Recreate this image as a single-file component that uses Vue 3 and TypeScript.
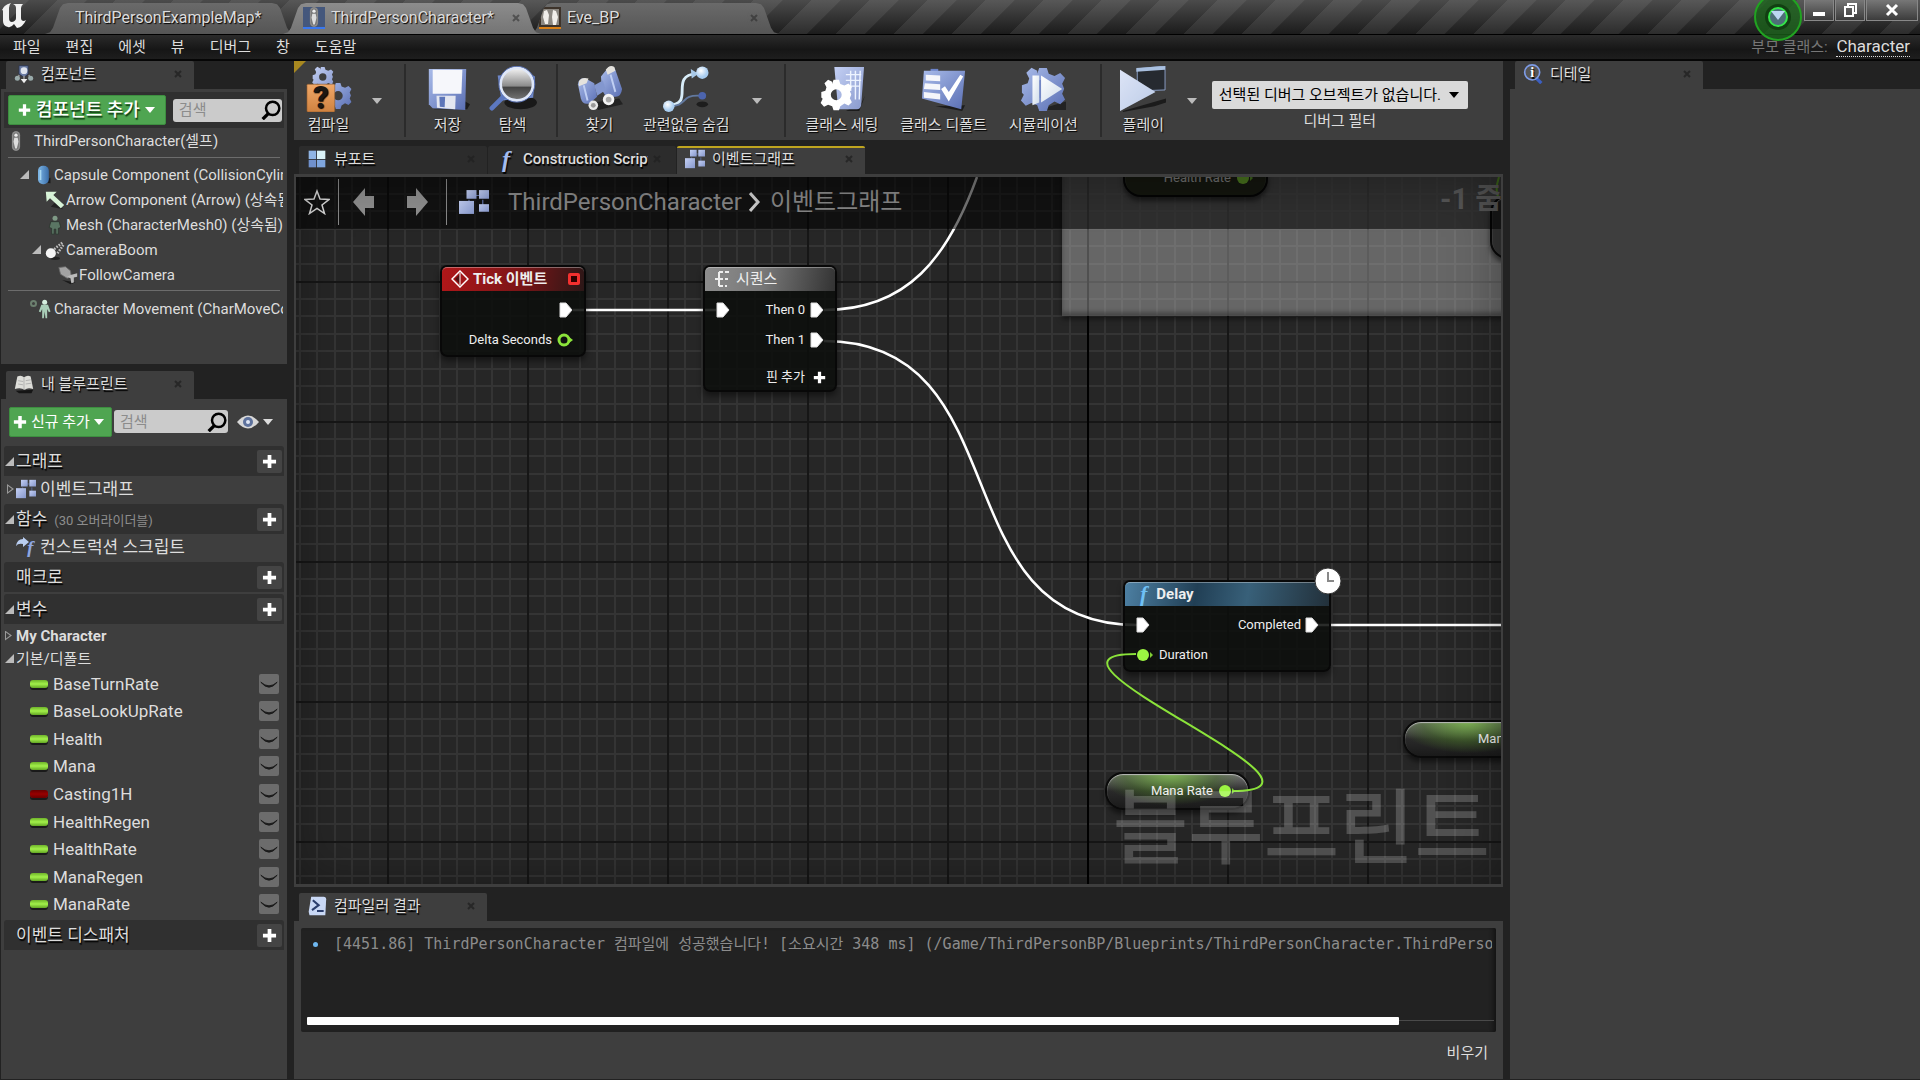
<script setup lang="ts">
interface Variable { name: string; kind: 'float' | 'bool' }
interface Tool { label: string; icon: string; menu?: boolean; last?: boolean }

const menus: string[] = ['파일', '편집', '에셋', '뷰', '디버그', '창', '도움말']

const tools: Tool[] = [
  { label: '컴파일', icon: 'compile', menu: true, last: true },
  { label: '저장', icon: 'save' },
  { label: '탐색', icon: 'browse', last: true },
  { label: '찾기', icon: 'find' },
  { label: '관련없음 숨김', icon: 'hide', menu: true, last: true },
  { label: '클래스 세팅', icon: 'settings' },
  { label: '클래스 디폴트', icon: 'defaults' },
  { label: '시뮬레이션', icon: 'simulate', last: true },
  { label: '플레이', icon: 'play', menu: true },
]

const components = [
  { label: 'Capsule Component (CollisionCylinder) (상속됨)', icon: 'capsule', depth: 1, open: true },
  { label: 'Arrow Component (Arrow) (상속됨)', icon: 'arrowc', depth: 2, open: false },
  { label: 'Mesh (CharacterMesh0) (상속됨)', icon: 'mesh', depth: 2, open: false },
  { label: 'CameraBoom', icon: 'boom', depth: 2, open: true },
  { label: 'FollowCamera', icon: 'camera', depth: 3, open: false },
]

const variables: Variable[] = [
  { name: 'BaseTurnRate', kind: 'float' },
  { name: 'BaseLookUpRate', kind: 'float' },
  { name: 'Health', kind: 'float' },
  { name: 'Mana', kind: 'float' },
  { name: 'Casting1H', kind: 'bool' },
  { name: 'HealthRegen', kind: 'float' },
  { name: 'HealthRate', kind: 'float' },
  { name: 'ManaRegen', kind: 'float' },
  { name: 'ManaRate', kind: 'float' },
]

const minor: number[] = [17, 34, 52, 69, 87, 104, 122]
</script>

<template>
  <div class="app">
    <svg class="defs" width="0" height="0" aria-hidden="true">
      <defs>
        <linearGradient id="blue" x1="0" y1="0" x2="1" y2="1">
          <stop offset="0" stop-color="#a9bbe9" /><stop offset="1" stop-color="#5a6fb4" />
        </linearGradient>
        <linearGradient id="pale" x1="0" y1="0" x2="1" y2="1">
          <stop offset="0" stop-color="#c4d0f4" /><stop offset="1" stop-color="#8798cc" />
        </linearGradient>
        <linearGradient id="white" x1="0" y1="0" x2="1" y2="1">
          <stop offset="0" stop-color="#ffffff" /><stop offset="1" stop-color="#cfdcea" />
        </linearGradient>
        <radialGradient id="ball" cx=".4" cy=".35">
          <stop offset="0" stop-color="#ffffff" /><stop offset="1" stop-color="#a9cdf0" />
        </radialGradient>
        <linearGradient id="lens" x1="0" y1="0" x2="0" y2="1">
          <stop offset="0" stop-color="#f5f5f5" /><stop offset=".55" stop-color="#8c8c8c" /><stop offset=".6" stop-color="#444" /><stop offset="1" stop-color="#777" />
        </linearGradient>
        <linearGradient id="orange" x1="0" y1="0" x2="0" y2="1">
          <stop offset="0" stop-color="#f0a869" /><stop offset="1" stop-color="#cf8240" />
        </linearGradient>
        <linearGradient id="cap" x1="0" y1="0" x2="1" y2="0">
          <stop offset="0" stop-color="#7db6e6" /><stop offset="1" stop-color="#3b6ea8" />
        </linearGradient>
      </defs>
      <symbol id="gear" viewBox="-12 -12 24 24">
        <path fill-rule="evenodd" d="M-2-11h4l1 3 3 1.200 3-1.500 2.500 2.500-1.500 3 1 2.500 0 .3-1 2.500 1.500 3-2.500 2.500-3-1.500L3 8.500 2 11.500h-4l-1-3-3-1.200-3 1.500-2.500-2.800 1.500-3L-11 2v-4l3-1 .8-2.500-1.500-3 2.700-2.600 3 1.600L-3-8zM0-4a4 4 0 1 0 0 8a4 4 0 1 0 0-8z" />
      </symbol>
      <symbol id="i-compile" viewBox="0 0 48 48">
        <use href="#gear" x="6" y="0" width="23" height="23" fill="url(#pale)" />
        <use href="#gear" x="19" y="16" width="29" height="30" fill="url(#blue)" />
        <rect x="1" y="19" width="29" height="29" rx="1" fill="url(#orange)" stroke="#8a5526" stroke-width=".6" />
        <text x="15.500" y="44" text-anchor="middle" class="mark">?</text>
      </symbol>
      <symbol id="i-save" viewBox="0 0 48 48">
        <path d="M9 45h35l3-5-5-3z" fill="#1c1c1c" />
        <path d="M4 3h39l-1 43-34-2-4-4z" fill="url(#blue)" />
        <path d="M8 4h31l-1 25H8z" fill="#f6f7fb" />
        <path d="M12 31h20l-.5 14-19-1.500z" fill="#e3e6f0" /><path d="M15 32h6l-.5 11-5-.6z" fill="#5d75b8" />
      </symbol>
      <symbol id="i-browse" viewBox="0 0 48 48">
        <ellipse cx="32" cy="38" rx="17" ry="7" fill="#191919" />
        <path d="M8 10l34-2 5 3-2 22-33 3z" fill="#6e87c8" />
        <path d="M15 31L2 44" stroke="#5c78c0" stroke-width="5" stroke-linecap="round" />
        <circle cx="28" cy="19" r="17" fill="url(#lens)" stroke="#dfe7f8" stroke-width="3" />
        <circle cx="28" cy="19" r="18.700" fill="none" stroke="#5b74b8" stroke-width="1" />
      </symbol>
      <symbol id="i-find" viewBox="0 0 48 48">
        <path d="M18 38l26-4 4 6-26 6z" fill="#222" />
        <path d="M1 19q1-7 8-6l9 5 3 14-8 7q-7 2-9-5z" fill="url(#blue)" /><path d="M25 11l8-10q6-1 7 3l7 20q-1 9-8 8l-8 1-5-8z" fill="url(#blue)" />
        <path d="M2 16q3-5 10-3l-2 5-8 3zM30 4q4-6 9-3l1 4-8 4z" fill="#e4e2dd" /><path d="M18 20l9-5 3 10-9 6z" fill="#8397cf" />
        <path d="M7 20l4 16M35 9l5 18" stroke="#c0cff3" stroke-width="2" />
        <circle cx="17" cy="41" r="5" fill="#e8e8e8" /><circle cx="17" cy="41" r="2.500" fill="#999" /><circle cx="33" cy="35" r="6" fill="#f4f4f4" /><circle cx="33" cy="35" r="3" fill="#aaa" />
      </symbol>
      <symbol id="i-hide" viewBox="0 0 48 48">
        <ellipse cx="41" cy="40" rx="6" ry="3" fill="#1d1d1d" />
        <path d="M5 41c30 0 0-31 30-33" fill="none" stroke="#d8ecf8" stroke-width="3" /><path d="M29 3l8 5-7 5z" fill="#a8c9e8" />
        <path d="M6 42c20 0 12-12 32-11" fill="none" stroke="#62799f" stroke-width="2" />
        <circle cx="6" cy="42" r="6" fill="url(#ball)" /><circle cx="41" cy="7" r="6.500" fill="url(#ball)" /><circle cx="41" cy="31" r="4" fill="#4c64ad" />
      </symbol>
      <symbol id="i-settings" viewBox="0 0 48 48">
        <path d="M28 47l16-8 4-8-6 16z" fill="#1c1c1c" />
        <path d="M16 1h31l-3 40q-1 5-6 4H20z" fill="url(#pale)" /><path d="M28 9h16M28 15h16M28 21h15M33 5v21M38 5v30M43 5l-1 30" stroke="#edf3ff" stroke-width="1.500" />
        <use href="#gear" x="1" y="12" width="34" height="36" fill="#fff" />
      </symbol>
      <symbol id="i-defaults" viewBox="0 0 48 48">
        <path d="M15 42l28 5 3-6z" fill="#1c1c1c" /><path d="M10 3h8v4h-8z" fill="#6c83c9" />
        <path d="M3 5h43l-4 40L1 34z" fill="url(#blue)" />
        <path d="M5 9l15 1v6L5 15zM4 18l16 1v6L3 24zM3 27l17 2v6L3 33z" fill="#f5f6fa" /><path d="M21 24l4-3 4 6L41 9l3 2-15 26z" fill="#fff" />
      </symbol>
      <symbol id="i-simulate" viewBox="0 0 48 48">
        <path d="M18 46l30-9v9z" fill="#222" />
        <use href="#gear" x="0" y="0" width="48" height="48" fill="url(#blue)" /><circle cx="24" cy="24" r="10" fill="#7286c4" />
        <path d="M13 10h7v28l-7 3z" fill="url(#white)" /><path d="M22 10l22 14-22 14z" fill="url(#white)" />
      </symbol>
      <symbol id="i-play" viewBox="0 0 48 48">
        <path d="M3 47l45-13v4l-12 4-33 6z" fill="#1b1b1b" />
        <path d="M18 3L47 0v25l-29 1z" fill="#262a30" stroke="#8ba0c8" stroke-width="1" /><path d="M17 2L47 0v4L17 6z" fill="#a9c0e0" />
        <path d="M0 4l37 23L0 47z" fill="url(#white)" /><path d="M0 4l37 23L0 47z" fill="#8fa5e2" opacity=".3" />
      </symbol>
      <symbol id="i-graph" viewBox="0 0 24 24">
        <path d="M11 6h6M8 14v-4M19 10v6" stroke="#5d6da1" stroke-width="1" />
        <rect x="6" y="1" width="8" height="8" fill="url(#pale)" /><rect x="16" y="1" width="8" height="8" fill="url(#pale)" />
        <rect x="0" y="11" width="12" height="12" fill="url(#pale)" /><rect x="16" y="14" width="8" height="7" fill="url(#pale)" />
      </symbol>
      <symbol id="i-viewport" viewBox="0 0 24 24">
        <rect x="2" y="2" width="9" height="10" fill="#8fb4e4" /><rect x="12" y="2" width="10" height="10" fill="#d9f1f7" /><rect x="2" y="13" width="9" height="9" fill="#6f90cc" /><rect x="12" y="13" width="10" height="9" fill="#7fa6de" />
      </symbol>
      <symbol id="i-components" viewBox="0 0 24 24">
        <path d="M6 2h11v10l-5 4-6-4z" fill="#6b7ca5" stroke="#2b3550" /><circle cx="12" cy="8" r="4" fill="#dfe4ee" />
        <path d="M6 13l-1 5M12 14v6M18 13l1 5" stroke="#8f8f8f" stroke-width="2" /><circle cx="4" cy="17" r="3" fill="#9aa" /><circle cx="20" cy="17" r="3" fill="#9aa" /><path d="M8 18h8l-4 5z" fill="#eee" />
      </symbol>
      <symbol id="i-book" viewBox="0 0 24 24">
        <path d="M2 20l4 3h15l2-4z" fill="#151515" /><path d="M4 3q5-2 8 1 4-3 8-1l3 15q-7-2-10 1-5-3-12-1z" fill="#deded9" /><path d="M12 4v15M5 8l6 1M5 12l6 1M14 8l6-1M14 12l7-1" stroke="#aaa" />
      </symbol>
      <symbol id="i-actor" viewBox="0 0 24 24">
        <rect x="7" y="0" width="10" height="24" rx="5" fill="#777" /><rect x="8" y="1" width="8" height="22" rx="4" fill="none" stroke="#999" />
        <circle cx="12" cy="5" r="2" fill="#eee" /><path d="M10 8h4l1 5-2 8h-2l-2-8z" fill="#ddd" />
      </symbol>
      <symbol id="i-capsule" viewBox="0 0 24 24">
        <path d="M13 21l8-6v7z" fill="#1c1c1c" /><rect x="6" y="1" width="13" height="22" rx="6" fill="url(#cap)" /><path d="M9 6v12" stroke="#a9d8f0" stroke-width="2" />
      </symbol>
      <symbol id="i-arrowc" viewBox="0 0 24 24">
        <path d="M7 20l15 3-10-8z" fill="#222" /><path d="M1 2h13l-4 4 13 12-4 4L6 10l-4 4z" fill="#d8f3d8" />
      </symbol>
      <symbol id="i-mesh" viewBox="0 0 24 24">
        <circle cx="12" cy="4" r="3" fill="#7f9a86" /><path d="M7 8h10l2 7-3 1v7h-3v-6h-2v6H8v-7l-3-1z" fill="#5a7563" stroke="#2b352e" />
      </symbol>
      <symbol id="i-movement" viewBox="0 0 24 24">
        <circle cx="14" cy="4" r="3" fill="#d5efdf" /><path d="M10 7h8l3 8-2 1-2-4v11h-2l-1-8-1 8h-2V12l-2 4-2-1z" fill="#a9ceb8" />
      </symbol>
      <symbol id="i-boom" viewBox="0 0 24 24">
        <path d="M11 11l10-8M15 16l7-10" stroke="#bbb" stroke-width="3" stroke-dasharray="2 1.500" /><ellipse cx="12" cy="22" rx="6" ry="2" fill="#222" /><circle cx="7" cy="16" r="6" fill="#f4f4f4" />
      </symbol>
      <symbol id="i-camera" viewBox="0 0 24 24">
        <path d="M5 18l10 5 6-2z" fill="#1b1b1b" /><path d="M1 3l8-1 6 5 1 7-5 2-8-5z" fill="#a2a2a2" stroke="#666" /><path d="M15 12l8-2v4l-4 1v6l-3 1-1-6-4-2z" fill="#bbb" />
      </symbol>
      <symbol id="i-info" viewBox="0 0 24 24">
        <path d="M15 16l7 7" stroke="#3c5fc0" stroke-width="4" /><circle cx="11" cy="10" r="9" fill="#555" stroke="#7d9be6" stroke-width="2" /><text x="11" y="16" text-anchor="middle" class="info">i</text>
      </symbol>
      <symbol id="i-log" viewBox="0 0 24 24">
        <path d="M5 1h15q3 0 3 3l-1 19H3L2 19z" fill="#c9d8f5" /><path d="M7 5l7 6-8 6M12 18h8" fill="none" stroke="#2b3e6d" stroke-width="2.500" />
      </symbol>
      <symbol id="i-search" viewBox="0 0 24 24">
        <circle cx="14" cy="10" r="8" fill="none" stroke="#000" stroke-width="3" /><path d="M9 16l-7 7" stroke="#000" stroke-width="4" />
      </symbol>
      <symbol id="i-plus" viewBox="0 0 16 16"><path d="M6 1h4v5h5v4h-5v5H6v-5H1V6h5z" fill="#fff" /></symbol>
      <symbol id="i-exec" viewBox="0 0 14 16"><path d="M1 1h6l6 7-6 7H1z" fill="#fff" stroke="#ddd" stroke-linejoin="round" /></symbol>
      <symbol id="i-pin" viewBox="0 0 18 14"><circle cx="7" cy="7" r="6" fill="#9cf542" /><path d="M14 4l3 3-3 3z" fill="#7fce35" /></symbol>
      <symbol id="i-eye" viewBox="0 0 22 14"><path d="M0 7q11-13 22 0-11 13-22 0z" fill="#d8d8d8" /><circle cx="11" cy="7" r="5" fill="#5e729d" /><circle cx="11" cy="7" r="2" fill="#dfe7f5" /></symbol>
      <symbol id="i-closed" viewBox="0 0 22 20"><path d="M2 8q9 8 18 0-9 11-18 0z" fill="#1a1a1a" stroke="#1a1a1a" /></symbol>
      <symbol id="i-x" viewBox="0 0 8 8"><path d="M1 1l6 6M7 1L1 7" stroke="#222" stroke-width="2" /></symbol>
    </svg>

    <header class="titlebar">
      <svg class="logo" viewBox="0 0 28 28" aria-label="Unreal">
        <path d="M2 10q1-6 9-8-2 2-2 5v10q0 4 3 4 4-1 4-4V7q0-3-3-4h10q-2 2-2 4v10q0 3 3 3l2-1q-3 7-9 8l-3-4q-3 4-6 3-5-1-5-6V10q0-2-1-2z" fill="#f2f2f2" />
      </svg>
      <nav class="doc-tabs">
        <button class="doc-tab"><span>ThirdPersonExampleMap*</span></button>
        <button class="doc-tab current">
          <span class="thumb"><svg width="22" height="20"><use href="#i-actor" /></svg></span>
          <span>ThirdPersonCharacter*</span><svg class="x" width="8" height="8"><use href="#i-x" /></svg>
        </button>
        <button class="doc-tab eve">
          <span class="thumb brown"><svg width="22" height="20" viewBox="0 0 22 20"><path d="M2 2h18v16H2z" fill="#8b8781" /><path d="M5 4l3-1 2 5-1 9H6L4 10zM14 3l3 1 2 6-2 8h-3l-1-8z" fill="#f1eeea" /></svg></span>
          <span>Eve_BP</span><svg class="x" width="8" height="8"><use href="#i-x" /></svg>
        </button>
      </nav>
      <div class="win">
        <svg class="source" width="48" height="42" viewBox="0 0 48 42">
          <circle cx="24" cy="17" r="23" fill="#1a661a" fill-opacity=".75" stroke="#21a321" stroke-width="2" /><circle cx="24" cy="17" r="13" fill="#123f12" />
          <circle cx="24" cy="17" r="9" fill="#4d6f78" stroke="#35e64a" stroke-width="2" /><path d="M17 11h14l-7 9z" fill="#bcd7f3" />
        </svg>
        <button class="wb" aria-label="minimize"><svg width="14" height="16"><path d="M1 10h12v4H1z" fill="#fff" /></svg></button>
        <button class="wb" aria-label="restore"><svg width="14" height="16"><path d="M2 5h8v9H2zM5 5V2h8v9h-3" fill="none" stroke="#fff" stroke-width="2" /></svg></button>
        <button class="wb wide" aria-label="close"><svg width="14" height="16"><path d="M2 3l10 10M12 3L2 13" stroke="#fff" stroke-width="3" /></svg></button>
      </div>
    </header>

    <div class="menubar">
      <button v-for="m in menus" :key="m">{{ m }}</button>
      <p class="parent">부모 클래스: <a href="#">Character</a></p>
    </div>

    <main class="main">
      <aside class="left">
        <section class="dock comps">
          <div class="tab"><svg width="20" height="20"><use href="#i-components" /></svg><span>컴포넌트</span><svg class="x" width="8" height="8"><use href="#i-x" /></svg></div>
          <div class="pane">
            <div class="bar dark">
              <button class="add big"><svg width="13" height="14"><use href="#i-plus" /></svg>컴포넌트 추가<i class="down"></i></button>
              <label class="search"><input type="text" placeholder="검색" aria-label="검색" /><svg width="20" height="20"><use href="#i-search" /></svg></label>
            </div>
            <div class="self"><svg width="24" height="20"><use href="#i-actor" /></svg>ThirdPersonCharacter(셀프)</div>
            <hr />
            <ul class="tree">
              <li v-for="c in components" :key="c.label" :class="'d' + c.depth">
                <i class="tri" :class="{ off: !c.open }"></i><svg width="20" height="20"><use :href="'#i-' + c.icon" /></svg><span>{{ c.label }}</span>
              </li>
            </ul>
            <hr />
            <ul class="tree">
              <li class="move"><i class="ring"></i><svg width="20" height="20"><use href="#i-movement" /></svg><span>Character Movement (CharMoveComp) (상속됨)</span></li>
            </ul>
          </div>
        </section>

        <section class="dock mine">
          <div class="tab"><svg width="20" height="20"><use href="#i-book" /></svg><span>내 블루프린트</span><svg class="x" width="8" height="8"><use href="#i-x" /></svg></div>
          <div class="pane">
            <div class="bar">
              <button class="add"><svg width="14" height="14"><use href="#i-plus" /></svg>신규 추가<i class="down"></i></button>
              <label class="search"><input type="text" placeholder="검색" aria-label="검색" /><svg width="20" height="20"><use href="#i-search" /></svg></label>
              <button class="view" aria-label="보기"><svg width="22" height="14"><use href="#i-eye" /></svg><i class="down"></i></button>
            </div>
            <h2 class="head"><i class="tri"></i>그래프<button aria-label="추가"><svg width="15" height="15"><use href="#i-plus" /></svg></button></h2>
            <div class="row"><i class="tri shut"></i><svg width="20" height="20"><use href="#i-graph" /></svg>이벤트그래프</div>
            <h2 class="head"><i class="tri"></i>함수<small>(30 오버라이더블)</small><button aria-label="추가"><svg width="15" height="15"><use href="#i-plus" /></svg></button></h2>
            <div class="row"><i class="tri off"></i><svg width="20" height="20" viewBox="0 0 20 20"><path d="M0 9q1-7 7-7V0l6 5-6 5V7Q2 6 0 9z" fill="#b9cdf0" /><text x="11" y="17" class="fsmall">f</text></svg>컨스트럭션 스크립트</div>
            <h2 class="head"><i class="tri off"></i>매크로<button aria-label="추가"><svg width="15" height="15"><use href="#i-plus" /></svg></button></h2>
            <h2 class="head next"><i class="tri"></i>변수<button aria-label="추가"><svg width="15" height="15"><use href="#i-plus" /></svg></button></h2>
            <div class="cat"><i class="tri shut"></i><b>My Character</b></div>
            <div class="cat"><i class="tri"></i>기본/디폴트</div>
            <ul class="vars">
              <li v-for="v in variables" :key="v.name">
                <i class="type" :class="v.kind"></i>{{ v.name }}
                <button aria-label="공개"><svg width="20" height="20"><use href="#i-closed" /></svg></button>
              </li>
            </ul>
            <h2 class="head"><i class="tri off"></i>이벤트 디스패처<button aria-label="추가"><svg width="15" height="15"><use href="#i-plus" /></svg></button></h2>
          </div>
        </section>
      </aside>

      <div class="center">
        <div class="toolbar">
          <template v-for="t in tools" :key="t.label">
            <button class="tool"><svg width="48" height="46"><use :href="'#i-' + t.icon" /></svg><span>{{ t.label }}</span></button>
            <button v-if="t.menu" class="more" :aria-label="t.label + ' 옵션'"><i class="down"></i></button>
            <i v-if="t.last" class="sep"></i>
          </template>
          <div class="debug">
            <div class="pick"><select id="dbg"><option>선택된 디버그 오브젝트가 없습니다.</option></select><i class="down"></i></div>
            <label for="dbg">디버그 필터</label>
          </div>
        </div>

        <div class="tabs">
          <div class="tab dim"><svg width="20" height="20"><use href="#i-viewport" /></svg><span>뷰포트</span><svg class="x" width="8" height="8"><use href="#i-x" /></svg></div>
          <div class="tab dim"><em class="fn">f</em><span class="cut">Construction Script</span><svg class="x" width="8" height="8"><use href="#i-x" /></svg></div>
          <div class="tab on"><svg width="20" height="20"><use href="#i-graph" /></svg><span>이벤트그래프</span><svg class="x" width="8" height="8"><use href="#i-x" /></svg></div>
        </div>

        <div class="graph">
          <svg class="grid" width="100%" height="100%">
            <defs>
              <pattern id="cells" x="91" y="104" width="140" height="140" patternUnits="userSpaceOnUse">
                <g fill="#343434">
                  <template v-for="p in minor" :key="p"><rect :x="p" y="0" width="2" height="140" /><rect x="0" :y="p" width="140" height="2" /></template>
                </g>
                <path d="M0 0h140v2H2v138H0z" fill="#161616" />
              </pattern>
            </defs>
            <rect width="100%" height="100%" fill="url(#cells)" /><rect x="791" width="2" height="100%" fill="#000" />
          </svg>
          <div class="comment"></div>
          <svg class="wires" width="100%" height="100%" fill="none">
            <g stroke="#fff" stroke-width="2.500">
              <path d="M277 133H420M528 133C612 133 652 80 681 0M528 164C727 164 642 448 841 448M1022 448H1400" />
            </g>
            <path d="M1203 0c-3 9-4 18 2 24M952 3h14" stroke="#8be33a" stroke-width="2" />
          </svg>

          <article class="node tick">
            <h3 class="red"><svg width="18" height="18" viewBox="0 0 18 18"><path d="M9 1l8 8-8 8-8-8z" fill="none" stroke="#fff" stroke-width="1.500" /><path d="M9 4v10L4 9z" fill="#501010" /><path d="M9 3v12" stroke="#fff" /></svg>Tick 이벤트<i class="stop"></i></h3>
            <p class="out"><svg width="14" height="16"><use href="#i-exec" /></svg></p>
            <p class="out">Delta Seconds<svg width="16" height="14" viewBox="0 0 16 14"><circle cx="7" cy="7" r="5" fill="none" stroke="#8be33a" stroke-width="3" /><path d="M12 4l4 3-4 3z" fill="#8be33a" /></svg></p>
          </article>
          <article class="node seq">
            <h3 class="gray"><svg width="16" height="16" viewBox="0 0 16 16"><path d="M1 8h5M5 1h4M5 8h4M5 15h4M5 1v14M11 1h4M11 8h3M11 15h2" stroke="#eee" stroke-width="2" fill="none" /></svg>시퀀스</h3>
            <p class="both"><svg width="14" height="16"><use href="#i-exec" /></svg><span>Then 0<svg width="14" height="16"><use href="#i-exec" /></svg></span></p>
            <p class="out">Then 1<svg width="14" height="16"><use href="#i-exec" /></svg></p>
            <button class="addpin">핀 추가<svg width="13" height="13"><use href="#i-plus" /></svg></button>
          </article>
          <article class="node delay">
            <h3 class="sky"><em>f</em>Delay</h3>
            <p class="both"><svg width="14" height="16"><use href="#i-exec" /></svg><span>Completed<svg width="14" height="16"><use href="#i-exec" /></svg></span></p>
            <p class="in"><svg width="18" height="14"><use href="#i-pin" /></svg>Duration</p>
            <svg class="clock" width="28" height="28" viewBox="0 0 28 28"><circle cx="14" cy="14" r="13" fill="#fff" stroke="#333" /><path d="M14 5v9h6" fill="none" stroke="#888" stroke-width="2" /></svg>
          </article>
          <div class="pill health">Health Rate<svg width="18" height="14"><use href="#i-pin" /></svg></div>
          <div class="pill mana">Mana Rate<svg width="18" height="14"><use href="#i-pin" /></svg></div>
          <div class="pill regen">Mana Regen</div>
          <div class="pill tall"></div>
          <svg class="wires" width="100%" height="100%" fill="none"><path d="M936 614C1070 614 710 477 840 477" stroke="#8be33a" stroke-width="2" /></svg>

          <div class="crumbs">
            <button aria-label="즐겨찾기"><svg width="26" height="26" viewBox="0 0 26 26"><path d="M13 2l3 8 9 .5-7 5.500 2.500 8.500L13 19.500 5.500 24.500 8 16 1 10.500l9-.5z" fill="none" stroke="#ddd" stroke-width="1.500" /></svg></button>
            <i class="line"></i>
            <button aria-label="뒤로"><svg width="22" height="28" viewBox="0 0 22 28"><path d="M0 14L12 0v8h9v12h-9v8z" fill="#8d8d8d" /></svg></button>
            <button aria-label="앞으로"><svg width="22" height="28" viewBox="0 0 22 28"><path d="M22 14L10 0v8H1v12h9v8z" fill="#8d8d8d" /></svg></button>
            <i class="line"></i>
            <svg class="gi" width="30" height="26" viewBox="0 0 24 24" preserveAspectRatio="none"><use href="#i-graph" width="24" height="24" /></svg>
            <span>ThirdPersonCharacter</span>
            <svg width="12" height="20" viewBox="0 0 12 20"><path d="M1 1l8 9-8 9" fill="none" stroke="#ccc" stroke-width="3" /></svg>
            <span>이벤트그래프</span>
            <strong class="zoom">-1 줌</strong>
          </div>
          <strong class="watermark">블루프린트</strong>
        </div>

        <section class="dock results">
          <div class="tab"><svg width="20" height="20"><use href="#i-log" /></svg><span>컴파일러 결과</span><svg class="x" width="8" height="8"><use href="#i-x" /></svg></div>
          <div class="pane">
            <div class="log">
              <p><i class="dot"></i>[4451.86] ThirdPersonCharacter 컴파일에 성공했습니다! [소요시간 348 ms] (/Game/ThirdPersonBP/Blueprints/ThirdPersonCharacter.ThirdPersonCharacter)</p>
              <div class="scroll"><i></i></div>
            </div>
            <button class="clear">비우기</button>
          </div>
        </section>
      </div>

      <section class="dock details">
        <div class="tab"><svg width="20" height="20"><use href="#i-info" /></svg><span>디테일</span><svg class="x" width="8" height="8"><use href="#i-x" /></svg></div>
        <div class="pane"></div>
      </section>
    </main>
  </div>
</template>

<style>
html, body { background: #222; }
body { margin: 0; }
</style>

<style scoped>
* { box-sizing: border-box; }
.app { display: flex; flex-direction: column; height: 100vh; overflow: hidden; background: #222; color: #ddd; font: 15px/20px Roboto, "Noto Sans CJK KR", sans-serif; }
.defs { position: absolute; }
svg { flex: none; display: block; }
button { font: inherit; color: inherit; background: none; border: 0; padding: 0; display: flex; align-items: center; }
p, h2, h3, ul { margin: 0; padding: 0; list-style: none; font-weight: 400; }
i { font-style: normal; flex: none; }
.mark { font: 900 32px Roboto, sans-serif; fill: #1d1712; }
.info { font: 700 17px "Liberation Serif", serif; fill: #fff; }
.fsmall { font: italic 700 19px "Liberation Serif", serif; fill: #8ea6e0; }
.down { width: 0; height: 0; border: 5px solid transparent; border-top: 6px solid #ddd; border-bottom: 0; }
.x { margin-left: auto; opacity: .8; }

.titlebar { display: flex; height: 35px; flex: none; border-bottom: 1px solid #000; background: linear-gradient(rgba(85, 85, 85, .85), rgba(30, 30, 30, .8)), repeating-linear-gradient(135deg, #666 0 20px, #111 21px 41px); }
.logo { width: 28px; height: 28px; margin: 1px 17px 0 0; }
.doc-tabs { display: flex; align-items: flex-end; }
.doc-tab { width: 250px; height: 31px; padding: 0 21px 1px 30px; font-size: 16px; text-shadow: 1px 1px 1px #000; background: linear-gradient(#6a6a6a, #555); clip-path: polygon(0 100%, 5px 94%, 8px 80%, 15px 16%, 18px 4%, 23px 0, calc(100% - 23px) 0, calc(100% - 18px) 4%, calc(100% - 15px) 16%, calc(100% - 8px) 80%, calc(100% - 5px) 94%, 100% 100%); }
.doc-tab.current { width: 258px; margin: 0 -12px; padding-left: 20px; background: linear-gradient(#8c8c8c, #747474); position: relative; z-index: 1; }
.doc-tab.eve { padding-left: 10px; }
.doc-tab .x { opacity: .5; }
.thumb { width: 22px; height: 22px; background: #44577c; border-bottom: 2px solid #3a78f0; margin-right: 6px; }
.thumb.brown { background: #3d332a; border-color: #d88018; }
.win { margin-left: auto; display: flex; align-items: flex-start; padding-right: 2px; position: relative; z-index: 2; }
.source { margin: 0 1px 0 0; height: 42px; }
.wb { width: 30px; height: 21px; margin-left: 1px; justify-content: center; border: 1px solid #888; border-top: 0; background: linear-gradient(#777, #3c3c3c); }
.wb.wide { width: 52px; }

.menubar { display: flex; height: 26px; flex: none; align-items: center; gap: 25px; padding: 0 10px 1px 13px; background: linear-gradient(#2b2b2b, #161616 60%, #1e1e1e); border-bottom: 2px solid #060606; }
.parent { margin-left: auto; color: #777; }
.parent a { color: #ddd; margin-left: 5px; font-size: 17px; text-decoration: none; border-bottom: 1px dotted #ddd; }

.main { display: flex; flex: 1; min-height: 0; gap: 7px; padding: 0 0 1px 1px; }
.left { width: 286px; flex: none; display: flex; flex-direction: column; gap: 7px; }
.dock { display: flex; flex-direction: column; min-height: 0; }
.tab { width: 188px; height: 28px; margin-left: 5px; padding: 0 12px 2px 8px; display: flex; align-items: center; gap: 7px; background: #3e3e3e; border-radius: 2px 2px 0 0; text-shadow: 1px 2px 1px #000; flex: none; }
.pane { background: #3e3e3e; flex: 1; min-height: 0; overflow: hidden; }
.comps { height: 303px; }
.mine { flex: 1; }
.bar { display: flex; align-items: center; height: 47px; padding: 0 8px 2px; gap: 2px; }
.bar.dark { height: 36px; margin: 3px 3px 0; padding: 0 2px 0 4px; gap: 7px; background: #303030; }
.add { height: 30px; background: #4fa551; border: 1px solid #3d8e40; border-radius: 2px; padding: 0 7px 0 3px; gap: 4px; color: #fff; white-space: nowrap; }
.add.big { font-size: 18px; font-weight: 500; padding: 0 10px 0 9px; text-shadow: 1px 2px 1px #134015; gap: 5px; }
.add .down { border-top-color: #fff; }
.search { flex: 1; min-width: 0; display: flex; align-items: center; height: 23px; background: #cbcbcb; border-radius: 3px; padding: 0 1px 0 6px; }
.search input { flex: 1; min-width: 0; width: 0; padding: 0; border: 0; background: none; outline: 0; font: inherit; }
.search input::placeholder { color: #8c8c8c; opacity: 1; }
.view { gap: 4px; padding: 0 6px 0 7px; }
.self { display: flex; align-items: center; gap: 6px; height: 27px; padding: 0 0 2px 3px; }
hr { margin: 2px 7px 0; border: 0; border-top: 1px solid #6c6c6c; height: 1px; }
.tree { padding: 4px 4px 0 0; }
.tree li { display: flex; align-items: center; height: 25px; overflow: hidden; white-space: nowrap; }
.tree span { overflow: hidden; }
.tree svg { margin-left: 4px; margin-right: 1px; }
.tri { width: 0; height: 0; border-left: 9px solid transparent; border-bottom: 9px solid #bbb; }
.tri.off { visibility: hidden; }
.tri.shut { width: 7px; height: 10px; border: 0; background: #999; clip-path: polygon(0 0, 100% 50%, 0 100%, 0 0, 1px 2px, 1px 8px, 5px 50%, 1px 2px); margin-right: 2px; }
.tree .d1 { padding-left: 19px; }
.tree .d2 { padding-left: 31px; }
.tree .d3 { padding-left: 44px; }
.tree .move { padding-left: 24px; }
.ring { width: 7px; height: 7px; border: 2px solid #6c806f; border-radius: 4px; margin: 0 -4px 10px 5px; }
.move svg { margin-left: 0; }
.tree + hr { margin-top: 3px; }
hr + .tree:last-child { padding-top: 5px; }

.head { display: flex; align-items: center; height: 30px; margin: 0 3px; background: #303030; border-radius: 3px 3px 0 0; font-size: 17px; line-height: 24px; text-shadow: 1px 2px 1px #000; padding: 0 2px 0 1px; }
.head.next { margin-top: 2px; }
.head .tri { margin-right: 2px; }
.head small { font-size: 13px; color: #8d8d8d; margin: 4px 0 0 7px; text-shadow: none; }
.head button { margin-left: auto; width: 25px; height: 23px; background: #444; border-radius: 2px; justify-content: center; }
.row { display: flex; align-items: center; height: 28px; padding: 0 0 2px 6px; font-size: 17px; gap: 2px; }
.row svg { margin-right: 2px; }
.row .tri.shut { margin-right: 0; }
.row .tri.off { width: 7px; border-left-width: 7px; }
.cat { display: flex; align-items: center; height: 23px; padding-left: 4px; gap: 2px; }
.vars { display: grid; grid-template-rows: repeat(9, 1fr); height: 248px; }
.vars li { display: flex; align-items: center; padding: 0 8px 0 29px; font-size: 17px; gap: 5px; }
.vars button { margin-left: auto; width: 20px; height: 20px; background: #6c6c6c; border-radius: 2px; }
.type { width: 18px; height: 8px; border-radius: 3px; background: linear-gradient(#6fb42a, #a2f04a 50%, #63a624); box-shadow: 0 2px 0 #1a1a1a; }
.type.bool { background: linear-gradient(#6a0000, #980000 50%, #6a0000); }
.vars + .head { margin-top: 2px; }

.center { flex: 1; min-width: 0; display: flex; flex-direction: column; }
.toolbar { display: flex; height: 79px; flex: none; padding-left: 2px; background: linear-gradient(135deg, #a88820 0 8px, #3e3e3e 9px); overflow: hidden; }
.tool { flex-direction: column; min-width: 65px; padding: 5px 11px 0; white-space: nowrap; text-shadow: 1px 1px 1px #000; }
.tool svg { height: 46px; width: 48px; margin: 0 -4px; }
.tool span { margin-top: 3px; }
.more { width: 32px; justify-content: center; }
.more .down { border-top-color: #bbb; }
.sep { width: 2px; margin: 3px 9px 3px 11px; background: #2b2b2b; }
.debug { display: flex; flex-direction: column; align-items: center; padding-top: 20px; gap: 2px; margin-left: 4px; }
.pick { position: relative; }
.pick select { appearance: none; width: 256px; height: 28px; border: 0; border-radius: 2px; background: #dadada; color: #000; font: inherit; padding: 0 20px 0 7px; }
.pick .down { position: absolute; right: 9px; top: 11px; border-top-color: #000; }

.tabs { display: flex; gap: 1px; padding: 6px 0 0 5px; flex: none; }
.tabs .tab { margin: 0; }
.tab.dim { background: #2c2c2c; }
.tab.on { border-top: 2px solid #bfa520; padding-bottom: 4px; }
.cut { width: 125px; overflow: hidden; white-space: nowrap; font-weight: 500; }
.tab .cut + .x { margin-left: -2px; }
.fn { width: 20px; text-align: center; font: italic 700 24px/20px "Liberation Serif", serif; color: #a4bcf0; }

.graph { position: relative; flex: 1; min-height: 0; margin: 0 0 6px; border: 3px solid #3e3e3e; border-width: 3px 2px; overflow: hidden; background: #262626; }
.graph::after { content: ""; position: absolute; inset: 0; box-shadow: inset 0 0 50px rgba(0, 0, 0, .35); pointer-events: none; }
.grid, .wires { position: absolute; left: 0; top: 0; }
.comment { position: absolute; left: 766px; right: -60px; top: -60px; height: 199px; background: rgba(190, 190, 190, .42); box-shadow: 0 3px 5px rgba(0, 0, 0, .5), inset 0 -4px 4px rgba(40, 40, 40, .5); }
.node { position: absolute; border-radius: 7px; border: 2px solid #080808; background: rgba(13, 15, 12, .88); color: #eee; font-size: 13px; box-shadow: 0 4px 6px rgba(0, 0, 0, .45); }
.node h3 { display: flex; align-items: center; gap: 4px; height: 24px; padding: 0 4px 2px 9px; border-radius: 5px 5px 0 0; font-size: 15px; font-weight: 700; border-top: 1px solid rgba(255, 255, 255, .35); }
.node p { display: flex; align-items: center; height: 31px; padding: 7px 11px 0; gap: 5px; }
.node p + p { padding-top: 4px; }
.node .out { justify-content: flex-end; }
.both { justify-content: space-between; }
.both span { display: flex; gap: 5px; align-items: center; }
.tick { left: 144px; top: 88px; width: 146px; height: 92px; }
.seq { left: 407px; top: 88px; width: 134px; height: 127px; }
.delay { left: 827px; top: 403px; width: 208px; height: 92px; }
.delay .both { padding-right: 10px; }
.delay .both span { gap: 4px; }
h3.red { background: linear-gradient(100deg, #b01719, #7c1517 55%, #2b1717); }
.node h3.gray { background: linear-gradient(100deg, #8d8d8d, #777 45%, #333); font-weight: 400; gap: 6px; }
h3.sky { background: linear-gradient(100deg, #4d80a3, #213f55 35%, #386079 60%, #22303a); }
.node h3 em { font: italic 700 22px/20px "Liberation Serif", serif; color: #6fc0f5; margin: 0 5px 0 6px; }
.stop { margin-left: auto; width: 12px; height: 12px; border: 3px solid #f3302f; border-radius: 2px; background: #300; }
.addpin { margin: 14px 9px 0 auto; gap: 8px; }
.clock { position: absolute; right: -13px; top: -15px; }
.pill { position: absolute; display: flex; align-items: center; justify-content: flex-end; gap: 5px; width: 145px; height: 38px; padding: 0 12px; color: #eee; font-size: 13px; white-space: nowrap; border-radius: 18px; border: 2px solid #0a0a0a; background: radial-gradient(ellipse at 45% 0, rgba(130, 200, 75, .75), rgba(70, 110, 40, .5) 42%, transparent 65%), linear-gradient(#777, #2a2a2a 50%, #1a1a1a); box-shadow: 0 4px 5px rgba(0, 0, 0, .5), inset 0 1px 1px #bbb; }
.health { left: 827px; top: -18px; background: #2a3020; }
.mana { left: 809px; top: 595px; }
.regen { left: 1107px; top: 543px; padding: 0 0 0 73px; justify-content: flex-start; }
.tall { left: 1194px; top: 18px; height: 64px; background: #333; }
.crumbs { position: absolute; left: 0; right: 0; top: 0; height: 52px; display: flex; align-items: center; padding: 0 0 2px 8px; gap: 10px; background: rgba(0, 0, 0, .55); color: #858585; font-size: 24px; line-height: 30px; }
.crumbs .line { width: 1px; height: 46px; background: #888; margin: 0 2px 0 -2px; }
.crumbs button { width: 26px; justify-content: center; }
.crumbs button + button { margin: 0 8px 0 17px; }
.crumbs span + svg { margin: 0 -1px 0 -3px; }
.gi { margin-right: 9px; }
.zoom { position: absolute; left: 1144px; top: 6px; font-size: 29px; line-height: 32px; white-space: nowrap; color: #555; }
.watermark { position: absolute; right: 11px; bottom: 7px; font-size: 82px; font-weight: 500; line-height: 96px; color: rgba(255, 255, 255, .2); }

.results { height: 186px; flex: none; }
.results .pane { display: flex; flex-direction: column; padding: 7px; align-items: flex-end; }
.log { align-self: stretch; height: 104px; background: #222; border-radius: 2px; padding: 6px 2px 7px 6px; display: flex; flex-direction: column; justify-content: space-between; box-shadow: inset -5px 0 5px -3px #111; }
.log p { display: flex; align-items: center; overflow: hidden; white-space: nowrap; margin-right: 2px; font-family: "DejaVu Sans Mono", "Noto Sans CJK KR", monospace; color: #8c8c8c; }
.dot { width: 5px; height: 5px; border-radius: 3px; background: #6fb8f0; margin: 0 16px 0 6px; }
.scroll { height: 8px; background: linear-gradient(transparent 3px, #4a4a4a 3px 4px, transparent 4px); }
.scroll i { display: block; width: 92%; height: 8px; background: #fff; border-radius: 1px; }
.clear { margin: 11px 8px 0 0; }
.details { width: 410px; flex: none; }
</style>
